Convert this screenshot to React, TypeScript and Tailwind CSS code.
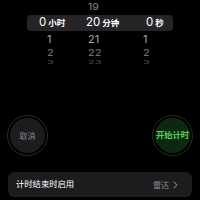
import React from "react";

const font = { fontFamily: '"Inter", "Noto Sans CJK SC", sans-serif' };

export default function App() {
  return (
    <div
      className="w-[200px] h-[200px] bg-black flex flex-col overflow-hidden"
      style={font}
    >
      {/* Picker */}
      <div className="w-[146px] ml-[27px] h-[66px] flex flex-col">
        <div className="h-[15px] flex items-center text-[10.5px] text-[#8a8a8a] leading-none scale-y-90">
          <div className="w-[48px]" />
          <div className="w-[53px] pl-[13px]">19</div>
          <div className="w-[45px]" />
        </div>
        <div className="h-[16px] flex items-center bg-[#252527] rounded-[4px] text-white leading-none">
          <div className="w-[48px] pl-[12px] flex items-baseline gap-[2px]">
            <span className="text-[11.5px]">0</span>
            <span className="text-[8.5px] font-semibold">小时</span>
          </div>
          <div className="w-[53px] pl-[11px] flex items-baseline gap-[2px]">
            <span className="text-[11.5px]">20</span>
            <span className="text-[8.5px] font-semibold">分钟</span>
          </div>
          <div className="w-[45px] pl-[18px] flex items-baseline gap-[2px]">
            <span className="text-[11.5px]">0</span>
            <span className="text-[8.5px] font-semibold">秒</span>
          </div>
        </div>
        <div className="h-[16px] flex items-center text-[11px] text-[#a8a8a8] leading-none">
          <div className="w-[48px] pl-[20px]">1</div>
          <div className="w-[53px] pl-[13px]">21</div>
          <div className="w-[45px] pl-[15px]">1</div>
        </div>
        <div className="h-[12px] flex items-center text-[11px] text-[#7e7e7e] leading-none scale-y-[0.8]">
          <div className="w-[48px] pl-[20px]">2</div>
          <div className="w-[53px] pl-[13px]">22</div>
          <div className="w-[45px] pl-[15px]">2</div>
        </div>
        <div className="h-[7px] flex items-center text-[11px] text-[#4a4a4a] leading-none scale-y-[0.45]">
          <div className="w-[48px] pl-[20px]">3</div>
          <div className="w-[53px] pl-[13px]">23</div>
          <div className="w-[45px] pl-[15px]">3</div>
        </div>
      </div>

      {/* Buttons */}
      <div className="mt-[49px] px-[7px] flex justify-between">
        <div className="w-[41px] h-[41px] rounded-full border border-[#2a2a2c] p-[2px]">
          <div className="w-full h-full rounded-full bg-[#1c1c1e] flex items-center justify-center text-[8px] text-[#8a8a8e]">
            取消
          </div>
        </div>
        <div className="w-[41px] h-[41px] rounded-full border border-[#16341b] p-[2px]">
          <div className="w-full h-full rounded-full bg-[#0d2811] flex items-center justify-center text-[8.3px] font-semibold text-[#5bcf5f] whitespace-nowrap">
            开始计时
          </div>
        </div>
      </div>

      {/* When timer ends */}
      <div className="mt-[16px] mx-[8px] h-[25px] rounded-[6px] bg-[#1c1c1e] flex items-center px-[8px]">
        <span className="text-[8.3px] text-white">计时结束时启用</span>
        <span className="ml-auto text-[8px] text-[#8e8e93]">雷达</span>
        <svg
          className="ml-[4px]"
          width="5"
          height="8"
          viewBox="0 0 5 8"
          fill="none"
          stroke="#6e6e73"
          strokeWidth="1.1"
          strokeLinecap="round"
          strokeLinejoin="round"
        >
          <path d="M1 1l3 3-3 3" />
        </svg>
        <span className="w-[6px]" />
      </div>
    </div>
  );
}
